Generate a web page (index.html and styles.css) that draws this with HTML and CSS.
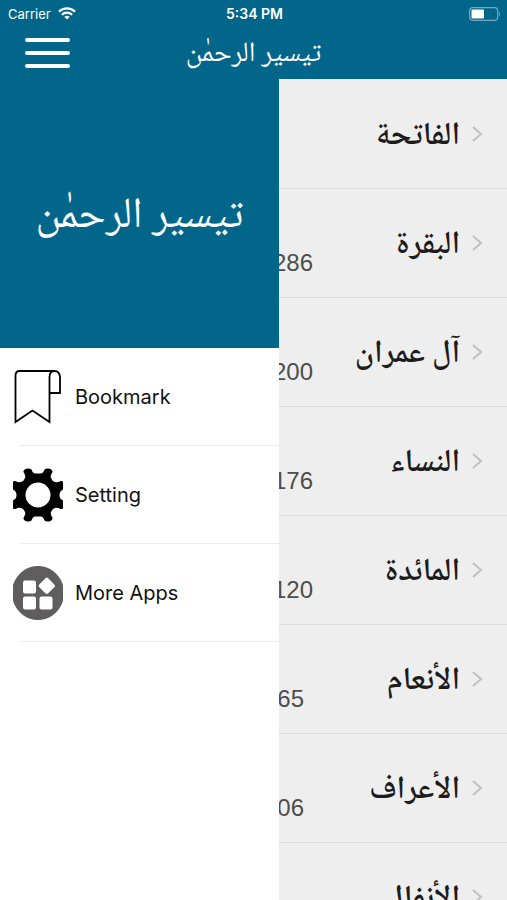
FILE: index.html
```html
<!DOCTYPE html>
<html lang="en">
<head>
<meta charset="utf-8">
<meta name="viewport" content="width=device-width, initial-scale=1">
<title>تيسير الرحمٰن</title>
<link rel="stylesheet" href="styles.css">
</head>
<body>
<header class="header">
  <div class="status">
    <span class="carrier">Carrier
      <svg width="18" height="13" viewBox="0 0 18 13" fill="none" stroke="#fff" stroke-width="2.3" aria-hidden="true"><path d="M1 4.6a11.4 11.4 0 0 1 16 0M3.9 7.7a7.3 7.3 0 0 1 10.2 0"/><path d="M9 12.4 6.4 9.9a3.8 3.8 0 0 1 5.2 0z" fill="#fff" stroke="none"/></svg>
    </span>
    <span class="time">5:34 PM</span>
    <svg class="battery" width="32" height="14" viewBox="0 0 32 14" aria-hidden="true"><rect x=".7" y=".7" width="28" height="12.6" rx="3.2" fill="none" stroke="#78a9bf" stroke-width="1.2"/><rect x="2.5" y="2.5" width="12.5" height="9" rx="1" fill="#fff"/><path d="M30 4.5q2 2.5 0 5z" fill="#78a9bf"/></svg>
  </div>
  <div class="bar">
    <button class="menu" type="button" aria-label="Menu"><span></span><span></span><span></span></button>
    <h1 class="title" lang="ar" dir="rtl">تيسير الرحمٰن</h1>
  </div>
</header>
<main class="main">
  <ul class="list">
    <li><a class="row" href="#"><span class="count"></span><span class="name" lang="ar" dir="rtl">الفاتحة</span><svg class="chev" viewBox="0 0 11 16"><path d="m1 1 8 7-8 7"/></svg></a></li>
    <li><a class="row" href="#"><span class="count">286</span><span class="name" lang="ar" dir="rtl">البقرة</span><svg class="chev" viewBox="0 0 11 16"><path d="m1 1 8 7-8 7"/></svg></a></li>
    <li><a class="row" href="#"><span class="count">200</span><span class="name" lang="ar" dir="rtl">آل عمران</span><svg class="chev" viewBox="0 0 11 16"><path d="m1 1 8 7-8 7"/></svg></a></li>
    <li><a class="row" href="#"><span class="count">176</span><span class="name" lang="ar" dir="rtl">النساء</span><svg class="chev" viewBox="0 0 11 16"><path d="m1 1 8 7-8 7"/></svg></a></li>
    <li><a class="row" href="#"><span class="count">120</span><span class="name" lang="ar" dir="rtl">المائدة</span><svg class="chev" viewBox="0 0 11 16"><path d="m1 1 8 7-8 7"/></svg></a></li>
    <li><a class="row" href="#"><span class="count short">165</span><span class="name" lang="ar" dir="rtl">الأنعام</span><svg class="chev" viewBox="0 0 11 16"><path d="m1 1 8 7-8 7"/></svg></a></li>
    <li><a class="row" href="#"><span class="count short">206</span><span class="name" lang="ar" dir="rtl">الأعراف</span><svg class="chev" viewBox="0 0 11 16"><path d="m1 1 8 7-8 7"/></svg></a></li>
    <li><a class="row" href="#"><span class="count short"></span><span class="name" lang="ar" dir="rtl">الأنفال</span><svg class="chev" viewBox="0 0 11 16"><path d="m1 1 8 7-8 7"/></svg></a></li>
  </ul>
  <nav class="drawer">
    <div class="banner" lang="ar" dir="rtl">تيسير الرحمٰن</div>
    <a class="item" href="#">
      <svg class="icon" viewBox="0 0 50 54" fill="none" stroke="#000" stroke-width="1.8" aria-hidden="true"><path d="M41 1H6.500Q2.500 1 2.500 5.500V52L19.500 40.500 36.500 52V7q0-6 5-6T47 7V23H36.500"/></svg>
      <span>Bookmark</span>
    </a>
    <a class="item" href="#">
      <svg class="icon" viewBox="0 0 50 54" aria-hidden="true"><path fill="#000" fill-rule="evenodd" d="M13 .8Q17 0 18.500 1.500 19.500 5 22 5.500H28Q30.500 5 31.500 1.500 33 0 37 .8 40 2 39.500 4 37 8 38 10 39 13 42 14 45 14.500 47 13.300 50 12.500 50 14V21.500Q46.500 23 46.500 27T50 32.500V40Q50 41.500 47 40.700 45 39.500 42 40 39 41 38 44 37 46 39.500 50 40 52 37 53.200 33 54 31.500 52.500 30.500 49 28 48.500H22Q19.500 49 18.500 52.500 17 54 13 53.200 10 52 10.500 50 13 46 12 44 11 41 8 40 5 39.500 3 40.700 0 41.500 0 40V32.500Q3.500 31 3.500 27T0 21.500V14Q0 12.500 3 13.300 5 14.500 8 14 11 13 12 10 13 8 10.500 4 10 2 13 .8ZM25 14.500a12.500 12.500 0 1 0 0 25 12.500 12.500 0 0 0 0-25Z"/></svg>
      <span>Setting</span>
    </a>
    <a class="item" href="#">
      <svg class="icon" viewBox="0 0 50 54" aria-hidden="true"><path fill="#5f5d5e" d="M0 19C4 7 14 0 25 0s21 7 25 19v16c-4 12-14 19-25 19S4 47 0 35Z"/><g fill="#fff"><rect x="10" y="14.500" width="13" height="13" rx="2"/><rect x="10" y="30.500" width="13" height="13" rx="2"/><rect x="26.500" y="30.500" width="13" height="13" rx="2"/><rect x="27.500" y="13.500" width="12.600" height="12.600" rx="2" transform="rotate(45 33.800 19.800)"/></g></svg>
      <span>More Apps</span>
    </a>
  </nav>
</main>
</body>
</html>
```
FILE: styles.css
```css
* { box-sizing: border-box; }
body {
  margin: 0;
  height: 100vh;
  display: flex;
  flex-direction: column;
  overflow: hidden;
  background: #eee;
  font-family: Inter, "Liberation Sans", sans-serif;
}
a { color: inherit; text-decoration: none; }
.header { background: #02668b; color: #fff; flex: none; }
.status {
  display: grid;
  grid-template-columns: 1fr auto 1fr;
  align-items: center;
  height: 27px;
  padding: 0 6px 0 8px;
  font-size: 13px;
}
.carrier { display: flex; align-items: center; gap: 7px; }
.time { font-size: 14px; font-weight: 600; }
.battery { justify-self: end; }
.bar {
  display: grid;
  grid-template-columns: 1fr auto 1fr;
  align-items: center;
  height: 52px;
  padding: 0 25px;
}
.menu {
  display: flex;
  flex-direction: column;
  gap: 9px;
  width: 45px;
  padding: 0;
  border: 0;
  background: none;
}
.menu span { height: 4px; border-radius: 2px; background: #fff; width: 100%; }
.title, .banner, .name {
  font-family: "Noto Naskh Arabic", Amiri, "Scheherazade New", "DejaVu Sans", serif;
}
.title { margin: 0; padding-top: 4px; font-size: 28px; font-weight: 400; line-height: 48px; }
.main { position: relative; flex: 1; min-height: 0; overflow: hidden; }
.list { margin: 0; padding: 1px 0 0; list-style: none; }
.row {
  display: flex;
  align-items: center;
  height: 109px;
  padding-right: 24px;
  border-bottom: 1px solid #d9d9d9;
}
.count {
  width: 313px;
  padding-top: 40px;
  text-align: right;
  font: 24px/32px "Liberation Sans", sans-serif;
  color: #4d4d4d;
}
.short { width: 304px; }
.name { margin-left: auto; padding-top: 6px; font-size: 32px; font-weight: 600; line-height: 48px; color: #1c1c1c; white-space: nowrap; }
.chev { width: 11px; height: 16px; margin-left: 12px; fill: none; stroke: #c0c0c0; stroke-width: 2; }
.drawer { position: absolute; top: 0; bottom: 0; left: 0; width: 55%; background: #fff; }
.banner {
  display: flex;
  align-items: center;
  justify-content: center;
  height: 269px;
  padding-top: 8px;
  background: #02668b;
  color: #fff;
  font-size: 43px;
}
.item {
  display: flex;
  align-items: center;
  gap: 12px;
  height: 98px;
  padding: 0 0 0 13px;
  font-size: 20px;
  color: #111;
  background: linear-gradient(#ececec, #ececec) 20px 100% / 100% 1px no-repeat;
}
.icon { width: 50px; height: 54px; flex: none; }
```
